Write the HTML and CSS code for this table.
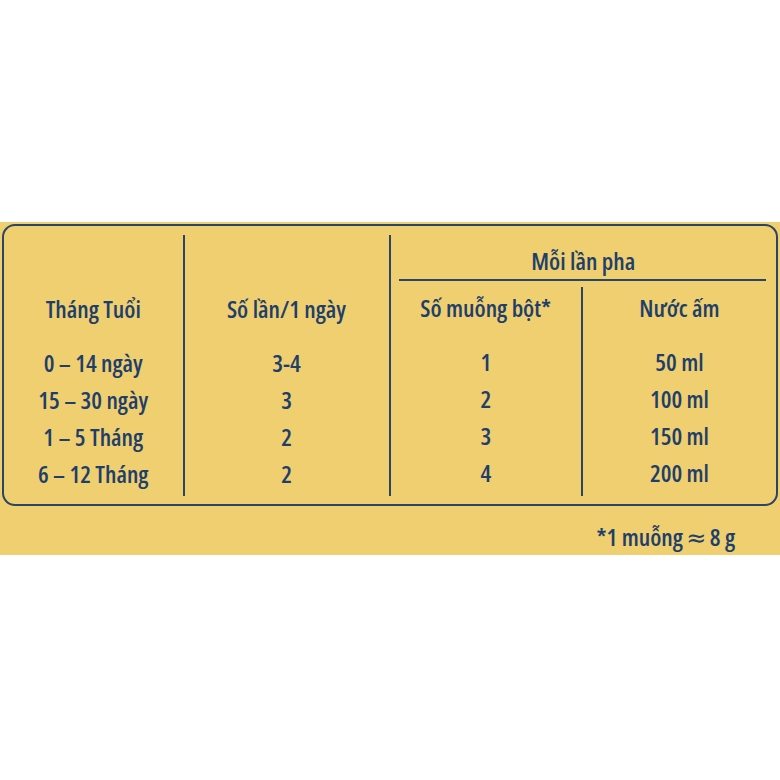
FILE: index.html
```html
<!DOCTYPE html>
<html lang="vi">
<head>
<meta charset="utf-8">
<title>Bảng pha sữa</title>
<link rel="stylesheet" href="styles.css">
</head>
<body>
<div class="page">
  <section class="band">
    <div class="box">
      <div class="col c1">
        <div class="head">Tháng Tuổi</div>
        <div class="cell">0 – 14 ngày</div>
        <div class="cell">15 – 30 ngày</div>
        <div class="cell">1 – 5 Tháng</div>
        <div class="cell">6 – 12 Tháng</div>
      </div>
      <div class="col c2">
        <div class="head">Số lần/1 ngày</div>
        <div class="cell">3-4</div>
        <div class="cell">3</div>
        <div class="cell">2</div>
        <div class="cell">2</div>
      </div>
      <div class="group">
        <div class="group-title">Mỗi lần pha</div>
        <div class="group-rule"></div>
        <div class="subcols">
          <div class="sub c3">
            <div class="head">Số muỗng bột*</div>
            <div class="cell">1</div>
            <div class="cell">2</div>
            <div class="cell">3</div>
            <div class="cell">4</div>
          </div>
          <div class="sub c4">
            <div class="head">Nước ấm</div>
            <div class="cell">50 ml</div>
            <div class="cell">100 ml</div>
            <div class="cell">150 ml</div>
            <div class="cell">200 ml</div>
          </div>
        </div>
      </div>
    </div>
    <div class="note">*1 muỗng <span class="approx">≈</span> 8 g</div>
  </section>
</div>
</body>
</html>
```

FILE: styles.css
```css
html, body {
  margin: 0;
  padding: 0;
  background: #ffffff;
}

.page {
  padding-top: 221.5px;
  font-family: "Open Sans", "Roboto Condensed", sans-serif;
  font-stretch: 75%;
  font-weight: 600;
  font-size: 24px;
  color: #1f3f6b;
}

.band {
  background: #efcf70;
  padding-top: 2.5px;
  height: 333px;
  box-sizing: border-box;
}

.box {
  margin: 0 2px;
  border: 2.5px solid #2a4565;
  border-radius: 13px;
  padding: 8.5px 0 8px;
  display: flex;
  align-items: stretch;
}

.col {
  padding-top: 55px;
  padding-bottom: 4px;
  text-align: center;
  box-sizing: border-box;
}

.c1 {
  width: 178.5px;
}

.c2 {
  width: 206px;
  border-left: 2.5px solid #2a4565;
}

.group {
  flex: 1;
  border-left: 2.5px solid #2a4565;
  display: flex;
  flex-direction: column;
}

.group-title {
  margin-top: 11.5px;
  line-height: 30px;
  text-align: center;
}

.group-rule {
  margin: 2.5px 10.5px 0 8.5px;
  height: 2.5px;
  background: #2a4565;
}

.subcols {
  flex: 1;
  display: flex;
  margin-top: 5.5px;
}

.sub {
  padding-top: 2px;
  padding-bottom: 4px;
  text-align: center;
  box-sizing: border-box;
}

.c3 {
  width: 190.5px;
}

.c4 {
  flex: 1;
  border-left: 2.5px solid #2a4565;
}

.head {
  line-height: 37px;
  margin-bottom: 17px;
}

.cell {
  line-height: 37px;
}

.note {
  margin-top: 13px;
  line-height: 36px;
  text-align: right;
  padding-right: 45px;
}

.approx {
  font-family: "DejaVu Sans", sans-serif;
  font-stretch: 100%;
  font-weight: 400;
  font-size: 24px;
  margin: 0 -1px;
}
```
